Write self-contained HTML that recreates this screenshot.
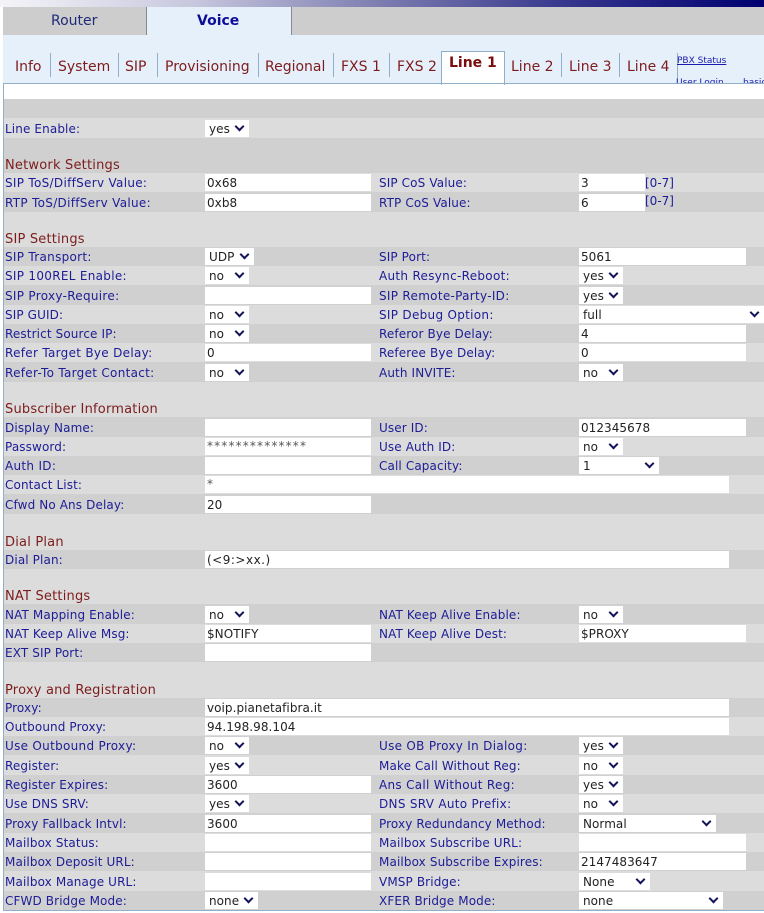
<!DOCTYPE html>
<html><head><meta charset="utf-8"><title>Voice - Line 1</title>
<style>
html,body{margin:0;padding:0;background:#fff}
#p{position:relative;width:764px;height:913px;overflow:hidden;background:#fff;font:12px/1 "DejaVu Sans","Liberation Sans",sans-serif}
#p div,#p span,#p a{position:absolute;white-space:nowrap}
.r{left:0;width:764px}
.d{background:#d0d0d0}.g{background:#dcdcdc}
.r .a,.r .c{color:#1c1c96;bottom:-1px;height:19px;line-height:19px;letter-spacing:.12px}
.r .a{left:5px}.r .c{left:379px}
.r .m{letter-spacing:.3px}
.r .h{left:5px;color:#7d1c1c;bottom:-2px;height:19px;line-height:19px;font-size:13px;letter-spacing:.2px;z-index:2}
.r .x,.r .y{background:#fff;height:17px;line-height:19px;color:#222;bottom:1px;box-sizing:border-box;padding-left:2px;letter-spacing:.05px}
.r .x{left:205px}.r .y{left:579px}
.r .s{padding-left:4px}
.r .s::after{content:"";position:absolute;right:6px;top:3px;width:5px;height:5px;border-right:2px solid #14145a;border-bottom:2px solid #14145a;transform:rotate(45deg)}
.w1{width:166px}.w2{width:524px}.w3{width:66px}.w4{width:167px}
.n{width:44px}
.r .k{color:#555;line-height:16px;letter-spacing:1.15px}
.t{top:67px;transform:translateY(-50%);color:#7d1c1c;font-size:14px;line-height:16px}
.v{top:53px;width:1px;height:24px;background:#8fb0c8}
</style></head><body><div id="p">
<div style="left:0;top:0;width:764px;height:7px;background:linear-gradient(90deg,#f4f4f8 0%,#c8c8de 25%,#7c7cb0 50%,#34348c 75%,#000070 100%)"></div>
<div style="left:3px;top:7px;width:761px;height:28px;background:#cdcdcd"></div>
<div style="left:3px;top:35px;width:761px;height:48px;background:#e6f0fb"></div>
<div style="left:146px;top:7px;width:1px;height:28px;background:#8a8a8a"></div>
<div style="left:147px;top:7px;width:144px;height:29px;background:#e6f0fb"></div>
<div style="left:291px;top:7px;width:1px;height:28px;background:#8a8a8a"></div>
<div style="left:51px;top:13px;color:#1f2a78;font-size:14px;line-height:16px">Router</div>
<div style="left:197px;top:13px;color:#0d0d9a;font-size:14px;line-height:16px;font-weight:bold">Voice</div>

<span class="t" style="left:15px">Info</span><div class="v" style="left:50px"></div>
<span class="t" style="left:58px">System</span><div class="v" style="left:118px"></div>
<span class="t" style="left:125px">SIP</span><div class="v" style="left:157px"></div>
<span class="t" style="left:165px">Provisioning</span><div class="v" style="left:258px"></div>
<span class="t" style="left:265px">Regional</span><div class="v" style="left:333px"></div>
<span class="t" style="left:341px">FXS 1</span><div class="v" style="left:389px"></div>
<span class="t" style="left:397px">FXS 2</span>
<div style="left:441px;top:51px;width:62px;height:33px;background:#fff;border:1px solid #8fb0c8;border-bottom:0"></div>
<span class="t" style="left:449px;top:63px;font-weight:bold;color:#7a0c0c">Line 1</span>
<span class="t" style="left:511px">Line 2</span><div class="v" style="left:561px"></div>
<span class="t" style="left:569px">Line 3</span><div class="v" style="left:619px"></div>
<span class="t" style="left:627px">Line 4</span><div class="v" style="left:677px;height:30px"></div>
<a style="left:677px;top:56px;font-size:9px;line-height:11px;color:#1a1ab0;text-decoration:underline">PBX Status</a>
<div style="left:676px;top:78px;width:88px;height:5px;overflow:hidden;color:#1a1ab0;font-size:9px;line-height:11px"><span style="left:0;top:0">User Login</span><span style="left:67px;top:0">basic</span></div>
<div style="left:3px;top:83px;width:761px;height:1px;background:#8fb0c8"></div>

<div class="r d" style="top:99px;height:19px"></div>
<div class="r g" style="top:118px;height:20px"><span class="a">Line Enable:</span><span class="x s n">yes</span></div>
<div class="r d" style="top:138px;height:35px"><span class="h">Network Settings</span></div>
<div class="r g" style="top:173px;height:19px"><span class="a m">SIP ToS/DiffServ Value:</span><span class="x w1">0x68</span><span class="c">SIP CoS Value:</span><span class="y w3">3</span><span style="left:645px;bottom:0;color:#1c1c96;line-height:17px">[0-7]</span></div>
<div class="r d" style="top:192px;height:20px"><span class="a m">RTP ToS/DiffServ Value:</span><span class="x w1">0xb8</span><span class="c">RTP CoS Value:</span><span class="y w3">6</span><span style="left:645px;bottom:2px;color:#1c1c96;line-height:17px">[0-7]</span></div>
<div class="r g" style="top:212px;height:35px"><span class="h">SIP Settings</span></div>
<div class="r d" style="top:247px;height:19px"><span class="a m">SIP Transport:</span><span class="x s" style="width:49px">UDP</span><span class="c">SIP Port:</span><span class="y w4">5061</span></div>
<div class="r g" style="top:266px;height:19px"><span class="a m">SIP 100REL Enable:</span><span class="x s n">no</span><span class="c m">Auth Resync-Reboot:</span><span class="y s n">yes</span></div>
<div class="r d" style="top:285px;height:20px"><span class="a m">SIP Proxy-Require:</span><span class="x w1"></span><span class="c m">SIP Remote-Party-ID:</span><span class="y s n">yes</span></div>
<div class="r g" style="top:305px;height:19px"><span class="a">SIP GUID:</span><span class="x s n">no</span><span class="c m">SIP Debug Option:</span><span class="y s" style="width:185px">full</span></div>
<div class="r d" style="top:324px;height:19px"><span class="a">Restrict Source IP:</span><span class="x s n">no</span><span class="c">Referor Bye Delay:</span><span class="y w4">4</span></div>
<div class="r g" style="top:343px;height:19px"><span class="a m">Refer Target Bye Delay:</span><span class="x w1">0</span><span class="c">Referee Bye Delay:</span><span class="y w4">0</span></div>
<div class="r d" style="top:362px;height:20px"><span class="a m">Refer-To Target Contact:</span><span class="x s n">no</span><span class="c">Auth INVITE:</span><span class="y s n">no</span></div>
<div class="r g" style="top:382px;height:35px"><span class="h">Subscriber Information</span></div>
<div class="r d" style="top:417px;height:20px"><span class="a">Display Name:</span><span class="x w1"></span><span class="c">User ID:</span><span class="y w4">012345678</span></div>
<div class="r g" style="top:437px;height:19px"><span class="a">Password:</span><span class="x w1 k">**************</span><span class="c">Use Auth ID:</span><span class="y s n">no</span></div>
<div class="r d" style="top:456px;height:19px"><span class="a m">Auth ID:</span><span class="x w1"></span><span class="c">Call Capacity:</span><span class="y s" style="width:80px">1</span></div>
<div class="r g" style="top:475px;height:19px"><span class="a">Contact List:</span><span class="x w2 k">*</span></div>
<div class="r d" style="top:494px;height:20px"><span class="a">Cfwd No Ans Delay:</span><span class="x w1">20</span></div>
<div class="r g" style="top:514px;height:36px"><span class="h">Dial Plan</span></div>
<div class="r d" style="top:550px;height:19px"><span class="a">Dial Plan:</span><span class="x w2" style="letter-spacing:.5px">(&lt;9:&gt;xx.)</span></div>
<div class="r g" style="top:569px;height:35px"><span class="h">NAT Settings</span></div>
<div class="r d" style="top:604px;height:20px"><span class="a">NAT Mapping Enable:</span><span class="x s n">no</span><span class="c">NAT Keep Alive Enable:</span><span class="y s n">no</span></div>
<div class="r g" style="top:624px;height:19px"><span class="a">NAT Keep Alive Msg:</span><span class="x w1">$NOTIFY</span><span class="c">NAT Keep Alive Dest:</span><span class="y w4">$PROXY</span></div>
<div class="r d" style="top:643px;height:19px"><span class="a">EXT SIP Port:</span><span class="x w1"></span></div>
<div class="r g" style="top:662px;height:36px"><span class="h">Proxy and Registration</span></div>
<div class="r d" style="top:698px;height:19px"><span class="a">Proxy:</span><span class="x w2">voip.pianetafibra.it</span></div>
<div class="r g" style="top:717px;height:19px"><span class="a">Outbound Proxy:</span><span class="x w2">94.198.98.104</span></div>
<div class="r d" style="top:736px;height:19px"><span class="a m">Use Outbound Proxy:</span><span class="x s n">no</span><span class="c m">Use OB Proxy In Dialog:</span><span class="y s n">yes</span></div>
<div class="r g" style="top:755px;height:20px"><span class="a">Register:</span><span class="x s n">yes</span><span class="c">Make Call Without Reg:</span><span class="y s n">no</span></div>
<div class="r d" style="top:775px;height:19px"><span class="a">Register Expires:</span><span class="x w1">3600</span><span class="c m">Ans Call Without Reg:</span><span class="y s n">yes</span></div>
<div class="r g" style="top:794px;height:19px"><span class="a">Use DNS SRV:</span><span class="x s n">yes</span><span class="c m">DNS SRV Auto Prefix:</span><span class="y s n">no</span></div>
<div class="r d" style="top:813px;height:20px"><span class="a">Proxy Fallback Intvl:</span><span class="x w1">3600</span><span class="c">Proxy Redundancy Method:</span><span class="y s" style="width:137px">Normal</span></div>
<div class="r g" style="top:833px;height:19px"><span class="a">Mailbox Status:</span><span class="x w1"></span><span class="c">Mailbox Subscribe URL:</span><span class="y w4"></span></div>
<div class="r d" style="top:852px;height:19px"><span class="a">Mailbox Deposit URL:</span><span class="x w1"></span><span class="c">Mailbox Subscribe Expires:</span><span class="y w4">2147483647</span></div>
<div class="r g" style="top:871px;height:20px"><span class="a">Mailbox Manage URL:</span><span class="x w1"></span><span class="c">VMSP Bridge:</span><span class="y s" style="width:71px">None</span></div>
<div class="r d" style="top:891px;height:19px"><span class="a">CFWD Bridge Mode:</span><span class="x s" style="width:53px">none</span><span class="c">XFER Bridge Mode:</span><span class="y s" style="width:144px">none</span></div>
<div style="left:3px;top:910px;width:761px;height:1px;background:#8fb0c8"></div>
<div style="left:0;top:84px;width:3px;height:829px;background:#fff"></div>
<div style="left:3px;top:83px;width:1px;height:828px;background:#8fb0c8"></div>
</div></body></html>
